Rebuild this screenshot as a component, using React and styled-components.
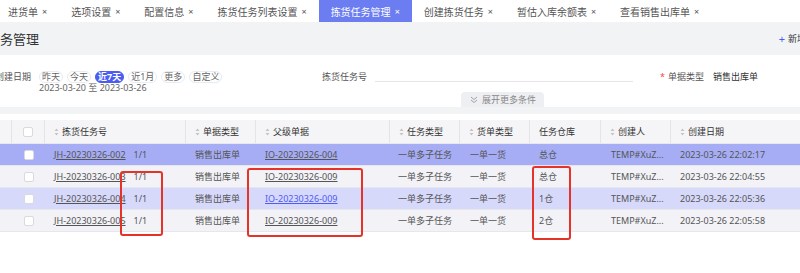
import React from "react";
import styled, { createGlobalStyle } from "styled-components";

const GlobalStyle = createGlobalStyle`
  html, body { margin: 0; padding: 0; background: #fff; }
  body {
    font-family: "Noto Sans", "Noto Sans CJK SC", sans-serif;
    overflow: hidden;
  }
  * { box-sizing: border-box; }
`;

const Page = styled.div`
  position: relative;
  width: 800px;
  height: 273px;
  overflow: hidden;
  background: #fff;
`;

const TabBar = styled.div`
  display: flex;
  height: 22px;
  margin-left: -4px;
  background: #fff;
`;

const Tab = styled.div`
  display: flex;
  align-items: center;
  padding: 0 12px;
  font-size: 10px;
  white-space: nowrap;
  color: ${(p) => (p.$active ? "#fff" : "#555")};
  background: ${(p) => (p.$active ? "#6c7df1" : "transparent")};
`;

const Close = styled.span`
  margin-left: 4px;
  font-size: 9px;
`;

const TitleBand = styled.div`
  display: flex;
  align-items: center;
  justify-content: space-between;
  height: 33px;
  background: #f2f3f5;
`;

const Title = styled.div`
  margin-left: -39px;
  font-size: 13px;
  color: #333;
  white-space: nowrap;
`;

const AddButton = styled.div`
  display: flex;
  align-items: center;
  gap: 3px;
  margin-right: -6px;
  font-size: 9px;
  color: #333;
  white-space: nowrap;
`;

const Plus = styled.span`
  color: #4a5cf0;
  font-size: 11px;
`;

const FilterArea = styled.div`
  display: flex;
  flex-direction: column;
  height: 52px;
  padding-top: 16px;
`;

const FilterGrid = styled.div`
  display: grid;
  grid-template-columns: 327px 338px 1fr;
  margin-left: -5px;
  height: 21px;
`;

const Field = styled.div`
  display: flex;
  align-items: flex-start;
`;

const Label = styled.div`
  font-size: 9px;
  line-height: 12px;
  color: #555;
  white-space: nowrap;
  margin-right: ${(p) => p.$gap || 8}px;
`;

const Required = styled.span`
  color: #f04a4a;
  margin-right: 3px;
`;

const ChipColumn = styled.div`
  display: flex;
  flex-direction: column;
`;

const Chips = styled.div`
  display: flex;
  gap: 4px;
  height: 12px;
`;

const Chip = styled.span`
  display: flex;
  align-items: center;
  height: 12px;
  line-height: 10px;
  padding: 0 2px;
  border-radius: 6px;
  font-size: 9px;
  white-space: nowrap;
  border: 1px solid ${(p) => (p.$active ? "#4b5cf0" : "#e8ebf2")};
  background: ${(p) => (p.$active ? "#4b5cf0" : "#fff")};
  color: ${(p) => (p.$active ? "#fff" : "#666")};
  font-weight: ${(p) => (p.$active ? 700 : 400)};
`;

const DateRange = styled.div`
  margin-top: 0;
  font-size: 9px;
  line-height: 10px;
  color: #666;
  white-space: nowrap;
`;

const UnderlineInput = styled.div`
  flex: 1;
  height: 21px;
  margin-right: 27px;
  margin-top: -10px;
  border-bottom: 1px solid #e6e6e6;
`;

const Value = styled.div`
  font-size: 9px;
  line-height: 12px;
  color: #333;
  white-space: nowrap;
`;

const ExpandRow = styled.div`
  display: flex;
  padding-left: 461px;
  margin-top: auto;
`;

const ExpandTab = styled.div`
  display: flex;
  align-items: center;
  gap: 4px;
  width: 83px;
  height: 15px;
  padding-left: 9px;
  background: #eeeff2;
  border-radius: 4px 4px 0 0;
  font-size: 9px;
  color: #888;
  white-space: nowrap;
`;

const GreyBand = styled.div`
  height: 7px;
  background: #f2f3f5;
`;

const Spacer = styled.div`
  height: 6px;
`;

const COLS = "12px 33px 141px 70px 134px 70px 70px 71px 70px 140px";

const HeaderRow = styled.div`
  display: grid;
  grid-template-columns: ${COLS};
  height: 24px;
  background: #f5f5f7;
  border-bottom: 1px solid #e8e8ec;
`;

const HeadCell = styled.div`
  display: flex;
  align-items: center;
  gap: 3px;
  padding-left: ${(p) => (p.$center ? 0 : 9)}px;
  justify-content: ${(p) => (p.$center ? "center" : "flex-start")};
  border-right: 1px solid #e3e3e8;
  font-size: 9px;
  color: #333;
  white-space: nowrap;
  overflow: hidden;
`;

const Row = styled.div`
  display: grid;
  grid-template-columns: ${COLS};
  height: 22px;
  background: ${(p) => p.$bg};
  border-bottom: 1px solid #e6e6ee;
`;

const Cell = styled.div`
  display: flex;
  align-items: center;
  gap: 8px;
  padding-left: ${(p) => (p.$center ? 0 : p.$pad || 9)}px;
  justify-content: ${(p) => (p.$center ? "center" : "flex-start")};
  font-size: 9px;
  color: #555;
  white-space: nowrap;
  overflow: hidden;
`;

const Link = styled.span`
  text-decoration: underline;
  color: ${(p) => (p.$blue ? "#4e5cf5" : "#555")};
`;

const Checkbox = styled.span`
  display: block;
  width: 10px;
  height: 10px;
  border: 1px solid #d9d9de;
  border-radius: 2px;
  background: #fff;
`;

const Mark = styled.div`
  position: absolute;
  border: 2px solid #e5332a;
  border-radius: 3px;
  pointer-events: none;
`;

const SortIcon = () => (
  <svg width="5" height="8" viewBox="0 0 5 8">
    <path d="M2.5 0.5 L4.5 3 L0.5 3 Z" fill="#c4c4c8" />
    <path d="M2.5 7.5 L4.5 5 L0.5 5 Z" fill="#c4c4c8" />
  </svg>
);

const DoubleDown = () => (
  <svg width="8" height="8" viewBox="0 0 8 8" fill="none" stroke="#999" strokeWidth="0.9">
    <path d="M1 1 L4 3.5 L7 1" />
    <path d="M1 4 L4 6.5 L7 4" />
  </svg>
);

const tabs = [
  "进货单",
  "选项设置",
  "配置信息",
  "拣货任务列表设置",
  "拣货任务管理",
  "创建拣货任务",
  "暂估入库余额表",
  "查看销售出库单",
];

const headers = [
  { t: "", sort: false },
  { t: "checkbox" },
  { t: "拣货任务号", sort: true },
  { t: "单据类型", sort: true },
  { t: "父级单据", sort: true },
  { t: "任务类型", sort: true },
  { t: "货单类型", sort: true },
  { t: "任务仓库", sort: false },
  { t: "创建人", sort: true },
  { t: "创建日期", sort: true },
];

const rows = [
  { id: "JH-20230326-002", parent: "IO-20230326-004", wh: "总仓", date: "2023-03-26 22:02:17", bg: "#a6adf5" },
  { id: "JH-20230326-003", parent: "IO-20230326-009", wh: "总仓", date: "2023-03-26 22:04:55", bg: "#f2f2f7" },
  { id: "JH-20230326-004", parent: "IO-20230326-009", wh: "1仓", date: "2023-03-26 22:05:36", bg: "#d7d9fb", blue: true },
  { id: "JH-20230326-005", parent: "IO-20230326-009", wh: "2仓", date: "2023-03-26 22:05:58", bg: "#f2f2f7" },
];

export default function App() {
  return (
    <Page>
      <GlobalStyle />
      <TabBar>
        {tabs.map((t) => (
          <Tab key={t} $active={t === "拣货任务管理"}>
            {t}
            <Close>×</Close>
          </Tab>
        ))}
      </TabBar>

      <TitleBand>
        <Title>拣货任务管理</Title>
        <AddButton>
          <Plus>+</Plus>新增
        </AddButton>
      </TitleBand>

      <FilterArea>
        <FilterGrid>
          <Field>
            <Label>创建日期</Label>
            <ChipColumn>
              <Chips>
                <Chip>昨天</Chip>
                <Chip>今天</Chip>
                <Chip $active>近7天</Chip>
                <Chip>近1月</Chip>
                <Chip>更多</Chip>
                <Chip>自定义</Chip>
              </Chips>
              <DateRange>2023-03-20 至 2023-03-26</DateRange>
            </ChipColumn>
          </Field>
          <Field>
            <Label>拣货任务号</Label>
            <UnderlineInput />
          </Field>
          <Field>
            <Label $gap={9}>
              <Required>*</Required>单据类型
            </Label>
            <Value>销售出库单</Value>
          </Field>
        </FilterGrid>
        <ExpandRow>
          <ExpandTab>
            <DoubleDown />
            展开更多条件
          </ExpandTab>
        </ExpandRow>
      </FilterArea>

      <GreyBand />
      <Spacer />

      <HeaderRow>
        {headers.map((h, i) => (
          <HeadCell key={i} $center={h.t === "checkbox"}>
            {h.t === "checkbox" ? (
              <Checkbox />
            ) : (
              <>
                {h.sort && <SortIcon />}
                {h.t}
              </>
            )}
          </HeadCell>
        ))}
      </HeaderRow>

      {rows.map((r) => (
        <Row key={r.id} $bg={r.bg}>
          <Cell />
          <Cell $center>
            <Checkbox />
          </Cell>
          <Cell>
            <Link>{r.id}</Link>
            <span>1/1</span>
          </Cell>
          <Cell>销售出库单</Cell>
          <Cell>
            <Link $blue={r.blue}>{r.parent}</Link>
          </Cell>
          <Cell $pad={8}>一单多子任务</Cell>
          <Cell $pad={10}>一单一货</Cell>
          <Cell $pad={9}>{r.wh}</Cell>
          <Cell $pad={10}>TEMP#XuZ...</Cell>
          <Cell>{r.date}</Cell>
        </Row>
      ))}

      <Mark style={{ left: 120, top: 171, width: 43, height: 65 }} />
      <Mark style={{ left: 247, top: 168, width: 116, height: 69 }} />
      <Mark style={{ left: 532, top: 166, width: 39, height: 74 }} />
    </Page>
  );
}
